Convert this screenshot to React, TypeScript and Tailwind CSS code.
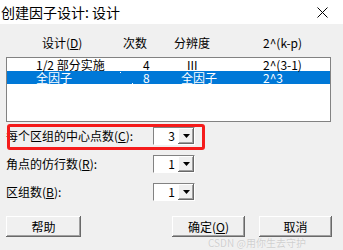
import React from 'react';

const cjk = { fontFamily: '"SimSun", "Noto Sans CJK SC", "Liberation Sans", sans-serif' };

const Combo: React.FC<{ value: string }> = ({ value }) => (
  <div className="flex h-[18px] w-[42px] border border-t-[#828282] border-l-[#828282] border-b-[#ffffff] border-r-[#ffffff] bg-white">
    <div className="flex flex-1 items-center justify-end pr-[3px] text-[12px] leading-none text-black">{value}</div>
    <div className="flex w-[16px] items-center justify-center bg-[#f0f0f0] shadow-[inset_-1px_-1px_#696969,inset_1px_1px_#ffffff,inset_-2px_-2px_#a0a0a0]">
      <svg width="7" height="4" viewBox="0 0 7 4">
        <path d="M0 0h7L3.5 4z" fill="#000" />
      </svg>
    </div>
  </div>
);

const Button: React.FC<{ children: React.ReactNode; className?: string }> = ({ children, className }) => (
  <div
    className={`flex h-[21px] items-center justify-center bg-[#f0f0f0] text-[12px] text-black shadow-[inset_-1px_-1px_#696969,inset_1px_1px_#ffffff,inset_-2px_-2px_#a0a0a0] ${className ?? ''}`}
  >
    {children}
  </div>
);

export default function App() {
  return (
    <div className="relative h-[250px] w-[343px] overflow-hidden bg-[#f0f0f0] text-black" style={cjk}>
      {/* title bar */}
      <div className="flex h-[24px] items-center justify-between bg-white pl-[1px] pr-[15px]">
        <span className="text-[14px] leading-none" style={{ fontFamily: '"Noto Sans CJK SC", "Liberation Sans", sans-serif' }}>
          创建因子设计: 设计
        </span>
        <svg width="11" height="11" viewBox="0 0 11 11">
          <path d="M0.5 0.5l10 10M10.5 0.5l-10 10" stroke="#000" strokeWidth="1" />
        </svg>
      </div>

      {/* column header */}
      <div className="mt-[11px] flex h-[16px] items-center pl-[42px] text-[12px] leading-none">
        <span className="w-[81px]">
          设计(<u>D</u>)
        </span>
        <span className="w-[51px]">次数</span>
        <span className="w-[89px]">分辨度</span>
        <span>2^(k-p)</span>
      </div>

      {/* list */}
      <div className="mx-[6px] mt-[6px] h-[65px] w-[325px] border border-[#828282] bg-white text-[12px] leading-[12px]">
        <div className="flex h-[13px] items-center pl-[29px]">
          <span className="w-[107px]">1/2 部分实施</span>
          <span className="w-[38px]">4</span>
          <span className="w-[82px] pl-[6px]">III</span>
          <span>2^(3-1)</span>
        </div>
        <div className="flex h-[13px] items-center bg-[#0078d7] pl-[29px] text-white">
          <span className="w-[107px]">
            全因子
            <span className="ml-[48px] inline-block h-px w-px bg-white align-top" />
            <span className="ml-[11px] inline-block h-px w-px bg-white align-bottom" />
          </span>
          <span className="w-[38px]">8</span>
          <span className="w-[82px]">全因子</span>
          <span>2^3</span>
        </div>
      </div>

      {/* options */}
      <div className="mt-[5px] flex flex-col gap-[10px] pl-[6px] text-[12px] leading-none">
        <div className="flex items-center">
          <span className="w-[147px]">
            每个区组的中心点数(<u>C</u>):
          </span>
          <Combo value="3" />
        </div>
        <div className="flex items-center">
          <span className="w-[147px]">
            角点的仿行数(<u>R</u>):
          </span>
          <Combo value="1" />
        </div>
        <div className="flex items-center">
          <span className="w-[147px]">
            区组数(<u>B</u>):
          </span>
          <Combo value="1" />
        </div>
      </div>

      {/* buttons */}
      <div className="mt-[15px] flex items-center pl-[6px]">
        <Button className="w-[75px]">帮助</Button>
        <Button className="ml-[91px] w-[73px]">
          确定(<u>O</u>)
        </Button>
        <Button className="ml-[14px] w-[73px]">取消</Button>
      </div>

      {/* annotation */}
      <div className="absolute left-[7px] top-[124px] h-[26px] w-[198px] rounded-[3px] border-[3px] border-[#f51c1c]" />
      <div
        className="absolute left-[208px] top-[238px] text-[10px] leading-none text-[#cfcfcf] [text-shadow:0_0_1px_#ffffff]"
        style={{ fontFamily: '"Noto Sans CJK SC", "Liberation Sans", sans-serif' }}
      >
        CSDN @用你生去守护
      </div>
    </div>
  );
}
